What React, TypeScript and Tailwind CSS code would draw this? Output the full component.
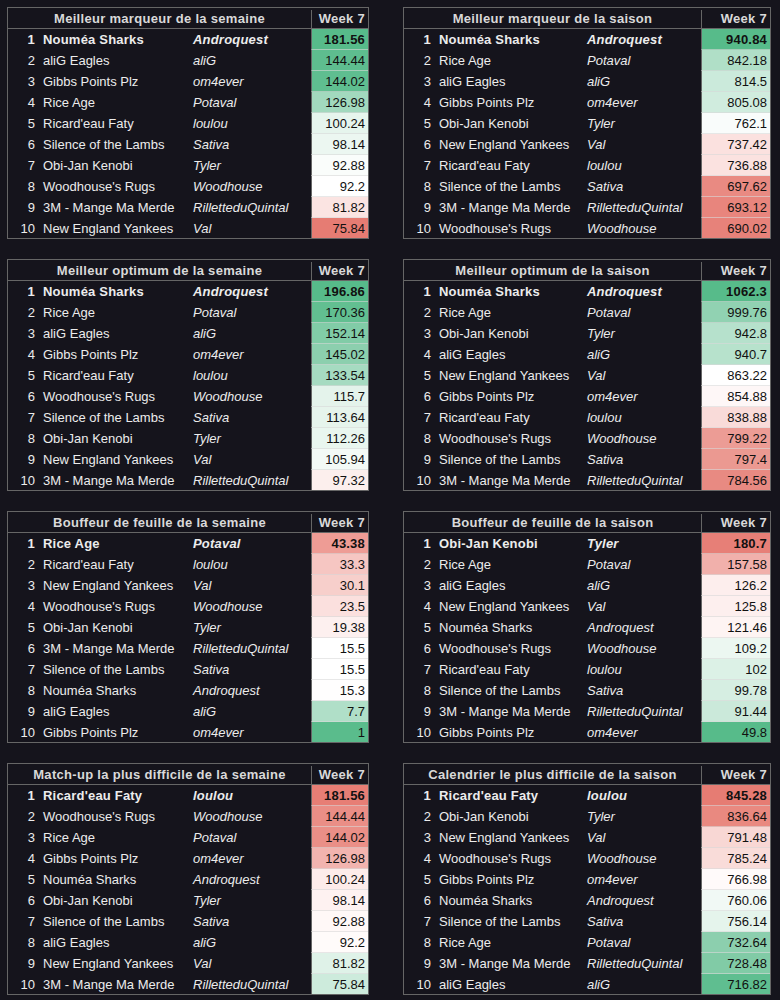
type Row = { team: string; owner: string; value: string; bg: string };
type Board = { title: string; wide: boolean; rows: Row[] };

const r = (team: string, owner: string, value: string, bg: string): Row => ({ team, owner, value, bg });

const boards: Board[] = [
  {
    title: "Meilleur marqueur de la semaine",
    wide: false,
    rows: [
      r("Nouméa Sharks", "Androquest", "181.56", "bg-[#57bb8a]"),
      r("aliG Eagles", "aliG", "144.44", "bg-[#5ebd8f]"),
      r("Gibbs Points Plz", "om4ever", "144.02", "bg-[#5fbe90]"),
      r("Rice Age", "Potaval", "126.98", "bg-[#a2d9be]"),
      r("Ricard'eau Faty", "loulou", "100.24", "bg-[#e6f5ed]"),
      r("Silence of the Lambs", "Sativa", "98.14", "bg-[#ecf7f1]"),
      r("Obi-Jan Kenobi", "Tyler", "92.88", "bg-[#fafdfb]"),
      r("Woodhouse's Rugs", "Woodhouse", "92.2", "bg-[#ffffff]"),
      r("3M - Mange Ma Merde", "RilletteduQuintal", "81.82", "bg-[#fbe4e2]"),
      r("New England Yankees", "Val", "75.84", "bg-[#e67c73]"),
    ],
  },
  {
    title: "Meilleur marqueur de la saison",
    wide: true,
    rows: [
      r("Nouméa Sharks", "Androquest", "940.84", "bg-[#57bb8a]"),
      r("Rice Age", "Potaval", "842.18", "bg-[#b0dfc7]"),
      r("aliG Eagles", "aliG", "814.5", "bg-[#cbeadb]"),
      r("Gibbs Points Plz", "om4ever", "805.08", "bg-[#d0ecde]"),
      r("Obi-Jan Kenobi", "Tyler", "762.1", "bg-[#f9fcfb]"),
      r("New England Yankees", "Val", "737.42", "bg-[#fbe1df]"),
      r("Ricard'eau Faty", "loulou", "736.88", "bg-[#fbe2e0]"),
      r("Silence of the Lambs", "Sativa", "697.62", "bg-[#e98a82]"),
      r("3M - Mange Ma Merde", "RilletteduQuintal", "693.12", "bg-[#e8857d]"),
      r("Woodhouse's Rugs", "Woodhouse", "690.02", "bg-[#e7827a]"),
    ],
  },
  {
    title: "Meilleur optimum de la semaine",
    wide: false,
    rows: [
      r("Nouméa Sharks", "Androquest", "196.86", "bg-[#57bb8a]"),
      r("Rice Age", "Potaval", "170.36", "bg-[#62bf91]"),
      r("aliG Eagles", "aliG", "152.14", "bg-[#81cca7]"),
      r("Gibbs Points Plz", "om4ever", "145.02", "bg-[#8ccfae]"),
      r("Ricard'eau Faty", "loulou", "133.54", "bg-[#a6dbc1]"),
      r("Woodhouse's Rugs", "Woodhouse", "115.7", "bg-[#e4f3eb]"),
      r("Silence of the Lambs", "Sativa", "113.64", "bg-[#e6f4ec]"),
      r("Obi-Jan Kenobi", "Tyler", "112.26", "bg-[#e9f6ef]"),
      r("New England Yankees", "Val", "105.94", "bg-[#f3faf6]"),
      r("3M - Mange Ma Merde", "RilletteduQuintal", "97.32", "bg-[#fcefed]"),
    ],
  },
  {
    title: "Meilleur optimum de la saison",
    wide: true,
    rows: [
      r("Nouméa Sharks", "Androquest", "1062.3", "bg-[#57bb8a]"),
      r("Rice Age", "Potaval", "999.76", "bg-[#91d2b2]"),
      r("Obi-Jan Kenobi", "Tyler", "942.8", "bg-[#b6e1cc]"),
      r("aliG Eagles", "aliG", "940.7", "bg-[#b7e2cc]"),
      r("New England Yankees", "Val", "863.22", "bg-[#ffffff]"),
      r("Gibbs Points Plz", "om4ever", "854.88", "bg-[#fef7f7]"),
      r("Ricard'eau Faty", "loulou", "838.88", "bg-[#f9dbd9]"),
      r("Woodhouse's Rugs", "Woodhouse", "799.22", "bg-[#ec9c95]"),
      r("Silence of the Lambs", "Sativa", "797.4", "bg-[#eb9991]"),
      r("3M - Mange Ma Merde", "RilletteduQuintal", "784.56", "bg-[#e88a82]"),
    ],
  },
  {
    title: "Bouffeur de feuille de la semaine",
    wide: false,
    rows: [
      r("Rice Age", "Potaval", "43.38", "bg-[#ee9c95]"),
      r("Ricard'eau Faty", "loulou", "33.3", "bg-[#f6c6c2]"),
      r("New England Yankees", "Val", "30.1", "bg-[#f7cfcb]"),
      r("Woodhouse's Rugs", "Woodhouse", "23.5", "bg-[#fbe0de]"),
      r("Obi-Jan Kenobi", "Tyler", "19.38", "bg-[#fdf0ef]"),
      r("3M - Mange Ma Merde", "RilletteduQuintal", "15.5", "bg-[#ffffff]"),
      r("Silence of the Lambs", "Sativa", "15.5", "bg-[#ffffff]"),
      r("Nouméa Sharks", "Androquest", "15.3", "bg-[#fffefe]"),
      r("aliG Eagles", "aliG", "7.7", "bg-[#b0dfc8]"),
      r("Gibbs Points Plz", "om4ever", "1", "bg-[#5abc8c]"),
    ],
  },
  {
    title: "Bouffeur de feuille de la saison",
    wide: true,
    rows: [
      r("Obi-Jan Kenobi", "Tyler", "180.7", "bg-[#e77f77]"),
      r("Rice Age", "Potaval", "157.58", "bg-[#f1b0ab]"),
      r("aliG Eagles", "aliG", "126.2", "bg-[#fdeeed]"),
      r("New England Yankees", "Val", "125.8", "bg-[#fdefee]"),
      r("Nouméa Sharks", "Androquest", "121.46", "bg-[#fef4f3]"),
      r("Woodhouse's Rugs", "Woodhouse", "109.2", "bg-[#ecf7f1]"),
      r("Ricard'eau Faty", "loulou", "102", "bg-[#dcf1e6]"),
      r("Silence of the Lambs", "Sativa", "99.78", "bg-[#d6eee2]"),
      r("3M - Mange Ma Merde", "RilletteduQuintal", "91.44", "bg-[#cbe9da]"),
      r("Gibbs Points Plz", "om4ever", "49.8", "bg-[#57bb8a]"),
    ],
  },
  {
    title: "Match-up la plus difficile de la semaine",
    wide: false,
    rows: [
      r("Ricard'eau Faty", "loulou", "181.56", "bg-[#e77e75]"),
      r("Woodhouse's Rugs", "Woodhouse", "144.44", "bg-[#ea8e86]"),
      r("Rice Age", "Potaval", "144.02", "bg-[#ea8f87]"),
      r("Gibbs Points Plz", "om4ever", "126.98", "bg-[#f2b4af]"),
      r("Nouméa Sharks", "Androquest", "100.24", "bg-[#fdecea]"),
      r("Obi-Jan Kenobi", "Tyler", "98.14", "bg-[#fef2f1]"),
      r("Silence of the Lambs", "Sativa", "92.88", "bg-[#fff8f7]"),
      r("aliG Eagles", "aliG", "92.2", "bg-[#fffbfa]"),
      r("New England Yankees", "Val", "81.82", "bg-[#dff2e8]"),
      r("3M - Mange Ma Merde", "RilletteduQuintal", "75.84", "bg-[#cdebdc]"),
    ],
  },
  {
    title: "Calendrier le plus difficile de la saison",
    wide: true,
    rows: [
      r("Ricard'eau Faty", "loulou", "845.28", "bg-[#e67c73]"),
      r("Obi-Jan Kenobi", "Tyler", "836.64", "bg-[#e98980]"),
      r("New England Yankees", "Val", "791.48", "bg-[#f8d7d4]"),
      r("Woodhouse's Rugs", "Woodhouse", "785.24", "bg-[#f9dcd9]"),
      r("Gibbs Points Plz", "om4ever", "766.98", "bg-[#fffafa]"),
      r("Nouméa Sharks", "Androquest", "760.06", "bg-[#f1f9f5]"),
      r("Silence of the Lambs", "Sativa", "756.14", "bg-[#e5f4ec]"),
      r("Rice Age", "Potaval", "732.64", "bg-[#8ccfae]"),
      r("3M - Mange Ma Merde", "RilletteduQuintal", "728.48", "bg-[#81cba6]"),
      r("aliG Eagles", "aliG", "716.82", "bg-[#5fbe90]"),
    ],
  },
];

function Leaderboard({ board }: { board: Board }) {
  const cols = board.wide ? "grid-cols-[30px_150px_1fr_69px]" : "grid-cols-[30px_152px_1fr_57px]";
  const headCols = board.wide ? "grid-cols-[1fr_69px]" : "grid-cols-[1fr_57px]";
  return (
    <div className="border border-[#666666]">
      <div
        className={`grid ${headCols} h-[21px] border-b border-[#666666] pt-[2px] leading-[18px] font-bold tracking-[0.3px] text-[#d9d9d9]`}
      >
        <div className="text-center whitespace-nowrap">{board.title}</div>
        <div className="border-l border-[#666666] pr-[3px] text-right">Week 7</div>
      </div>
      {board.rows.map((row, i) => (
        <div key={i} className={`grid ${cols} ${i === 0 ? "font-bold tracking-[0.2px]" : ""}`}>
          <div className="pt-[2px] pr-[3px] text-right leading-[18px]">{i + 1}</div>
          <div className="pt-[2px] pl-[5px] leading-[18px] whitespace-nowrap">{row.team}</div>
          <div className="pt-[2px] pl-[3px] leading-[18px] italic whitespace-nowrap">{row.owner}</div>
          <div
            className={`border-l border-[#666666] pt-[2px] pr-[3px] text-right leading-[18px] text-[#111111] ${row.bg} ${
              i < 9 ? "border-b border-b-[#d9d9d9]/60" : ""
            }`}
          >
            {row.value}
          </div>
        </div>
      ))}
    </div>
  );
}

export default function App() {
  return (
    <div className="min-h-[1000px] bg-[#15141c] pl-[7px] pt-[7px] font-['Liberation_Sans',Arial,sans-serif] text-[13px] leading-[20px] text-[#ececec]">
      <div className="grid grid-cols-[362px_368px] gap-x-[34px] gap-y-[20px]">
        {boards.map((b) => (
          <Leaderboard key={b.title} board={b} />
        ))}
      </div>
    </div>
  );
}
